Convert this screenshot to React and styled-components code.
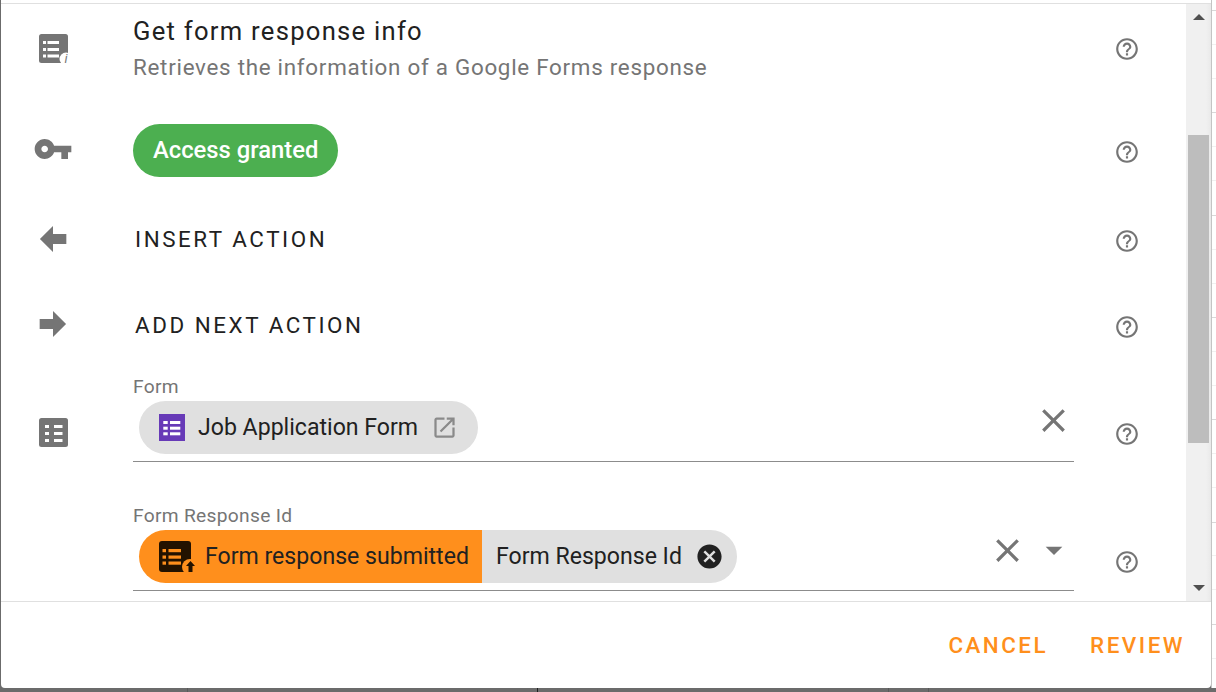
import React from "react";
import styled, { createGlobalStyle } from "styled-components";

const GlobalStyle = createGlobalStyle`
  html, body {
    margin: 0;
    padding: 0;
    height: 100%;
    overflow: hidden;
  }
  body {
    font-family: Roboto, "Liberation Sans", sans-serif;
  }
`;

const Page = styled.div`
  width: 1216px;
  height: 692px;
  display: flex;
  flex-direction: column;
  background: #6b6b6b;
`;
const Stage = styled.div`
  height: 688px;
  display: flex;
  padding-left: 1px;
`;
const BackdropStrip = styled.div`
  flex: 1;
  background:
    linear-gradient(#1f1f1f, #1f1f1f) 537px 0 / 1px 100% no-repeat,
    linear-gradient(#5a5a5a, #5a5a5a) 187px 0 / 1px 100% no-repeat,
    linear-gradient(#5a5a5a, #5a5a5a) 888px 0 / 1px 100% no-repeat,
    linear-gradient(#5a5a5a, #5a5a5a) 928px 0 / 1px 100% no-repeat;
`;
const Dialog = styled.div`
  width: 1210px;
  display: flex;
  flex-direction: column;
  background: #fff;
  border-radius: 0 0 4px 4px;
  overflow: hidden;
`;
const Gutter = styled.div`
  flex: 1;
  border-left: 1px solid #c4c4c4;
  background: repeating-linear-gradient(
    #fff 0 10px,
    #d8d8d8 10px 11px,
    #fff 11px 44px,
    #f0f0f0 44px 45px,
    #fff 45px 78px,
    #f0f0f0 78px 79px,
    #fff 79px 102.3px
  );
`;
const TopEdge = styled.div`
  height: 3px;
  border-bottom: 1px solid #e0e0e0;
`;
const Middle = styled.div`
  height: 597px;
  display: flex;
  border-bottom: 1px solid #e0e0e0;
`;
const Content = styled.div`
  flex: 1;
  overflow: hidden;
`;
const Row = styled.div`
  height: ${(p) => p.$h}px;
  margin-bottom: ${(p) => p.$after || 0}px;
  display: grid;
  grid-template-columns: 132px 941px 1fr;
  align-items: center;
`;
const IconCell = styled.div`
  display: flex;
  justify-content: center;
  width: 104px;
  margin-bottom: ${(p) => p.$lift}px;
`;
const Main = styled.div`
  min-width: 0;
  align-self: ${(p) => (p.$top ? "start" : "center")};
`;
const HelpCell = styled.div`
  display: flex;
  justify-content: center;
  width: 105px;
`;
const Icon = styled.svg`
  display: block;
  flex: none;
  overflow: visible;
  fill: ${(p) => p.$color || "#757575"};
`;
const Title = styled.div`
  font-size: 25.6px;
  line-height: 32px;
  font-weight: 400;
  letter-spacing: 1.27px;
  color: #212121;
`;
const Subtitle = styled.div`
  font-size: 22.4px;
  line-height: 32px;
  letter-spacing: 0.72px;
  margin-top: 4px;
  color: #757575;
`;
const GrantedPill = styled.div`
  display: inline-flex;
  align-items: center;
  height: 53px;
  padding: 0 20px;
  border-radius: 27px;
  background: #4caf50;
  color: #fff;
  font-size: 23.8px;
  font-weight: 500;
  margin-bottom: 4px;
`;
const ActionLabel = styled.div`
  padding-left: 2px;
  font-size: 22.4px;
  font-weight: 400;
  letter-spacing: 2.55px;
  color: #212121;
  margin-bottom: 4px;
`;
const FieldLabel = styled.div`
  font-size: 19.2px;
  line-height: 21px;
  letter-spacing: 0.3px;
  color: #757575;
`;
const Field = styled.div`
  display: flex;
  align-items: flex-start;
  justify-content: space-between;
  box-sizing: border-box;
  height: 65px;
  padding: 4px 0 0 6px;
  border-bottom: 1px solid #8c8c8c;
`;
const Chip = styled.div`
  display: flex;
  align-items: center;
  height: 53px;
  font-size: 23.1px;
  color: #212121;
  background: ${(p) => (p.$orange ? "#ff8f1c" : "#e0e0e0")};
  border-radius: ${(p) => p.$radius};
  padding: ${(p) => p.$padding};
  gap: ${(p) => p.$gap}px;
`;
const ChipGroup = styled.div`
  display: flex;
`;
const FieldTools = styled.div`
  display: flex;
  align-items: center;
  padding-right: ${(p) => p.$pad}px;
  gap: ${(p) => p.$gap}px;
`;
const Scrollbar = styled.div`
  width: 25px;
  background: linear-gradient(90deg, #f0f0f0 80%, #e9e9e9);
  display: flex;
  flex-direction: column;
  justify-content: space-between;
  position: relative;
`;
const ScrollThumb = styled.div`
  position: absolute;
  top: 131px;
  left: 2px;
  width: 21px;
  height: 308px;
  background: #bdbdbd;
`;
const ScrollArrow = styled.div`
  width: 0;
  height: 0;
  margin: ${(p) => (p.$up ? "10px 0 0 7px" : "0 0 10px 7px")};
  border-left: 6px solid transparent;
  border-right: 6px solid transparent;
  ${(p) => (p.$up ? "border-bottom" : "border-top")}: 6px solid #505050;
`;
const Footer = styled.div`
  flex: 1;
  display: flex;
  justify-content: flex-end;
  align-items: center;
  gap: 42px;
  padding: 0 26px 0 0;
`;
const FooterButton = styled.div`
  font-size: 22.4px;
  font-weight: 500;
  letter-spacing: 2.5px;
  color: #ff8f1c;
`;

const HELP =
  "M11 18h2v-2h-2v2zm1-16C6.48 2 2 6.48 2 12s4.48 10 10 10 10-4.48 10-10S17.52 2 12 2zm0 18c-4.41 0-8-3.59-8-8s3.59-8 8-8 8 3.59 8 8-3.59 8-8 8zm0-14c-2.21 0-4 1.79-4 4h2c0-1.1.9-2 2-2s2 .9 2 2c0 2-3 1.75-3 5h2c0-2.25 3-2.5 3-5 0-2.21-1.79-4-4-4z";
const CLOSE =
  "M19 6.41L17.59 5 12 10.59 6.41 5 5 6.41 10.59 12 5 17.59 6.41 19 12 13.41 17.59 19 19 17.59 13.41 12z";

const Help = () => (
  <HelpCell>
    <Icon width="26" height="26" viewBox="0 0 24 24">
      <path d={HELP} />
    </Icon>
  </HelpCell>
);

const ClearIcon = () => (
  <Icon width="39" height="39" viewBox="0 0 24 24">
    <path d={CLOSE} />
  </Icon>
);

// three bullet + line rows, used by all the form icons
const ListLines = ({ bx, bw, lx, lw, ys, h = 3, fill = "#fff" }) => (
  <>
    {ys.map((y) => (
      <React.Fragment key={y}>
        <rect x={bx} y={y} width={bw} height={h} fill={fill} />
        <rect x={lx} y={y} width={lw} height={h} fill={fill} />
      </React.Fragment>
    ))}
  </>
);

const App = () => {
  return (
    <>
      <GlobalStyle />
      <Page>
        <Stage>
          <Dialog>
            <TopEdge />
            <Middle>
              <Content>
                <Row $h={90} $after={6}>
                  <IconCell $lift={2}>
                    <Icon width="29" height="29" viewBox="0 0 29 29">
                      <rect width="29" height="29" rx="2.5" />
                      <ListLines bx={4} bw={3} lx={8.5} lw={11.5} ys={[7, 14, 20.5]} />
                      <circle cx="27" cy="25" r="6.5" fill="#fff" />
                      <text x="25.5" y="29" fontSize="13" fontStyle="italic" fontFamily="Roboto" fill="#757575">i</text>
                    </Icon>
                  </IconCell>
                  <Main>
                    <Title>Get form response info</Title>
                    <Subtitle>Retrieves the information of a Google Forms response</Subtitle>
                  </Main>
                  <Help />
                </Row>
                <Row $h={104}>
                  <IconCell $lift={6}>
                    <Icon width="40" height="40" viewBox="0 0 24 24">
                      <path d="M12.65 10C11.83 7.67 9.61 6 7 6c-3.31 0-6 2.69-6 6s2.69 6 6 6c2.61 0 4.83-1.67 5.65-4H17v4h4v-4h2v-4H12.65zM7 14c-1.1 0-2-.9-2-2s.9-2 2-2 2 .9 2 2-.9 2-2 2z" />
                    </Icon>
                  </IconCell>
                  <Main>
                    <GrantedPill>Access granted</GrantedPill>
                  </Main>
                  <Help />
                </Row>
                <Row $h={74}>
                  <IconCell $lift={5}>
                    <Icon width="40" height="40" viewBox="0 0 24 24">
                      <path d="M20,9V15H12V19.84L4.16,12L12,4.16V9H20Z" />
                    </Icon>
                  </IconCell>
                  <Main>
                    <ActionLabel>INSERT ACTION</ActionLabel>
                  </Main>
                  <Help />
                </Row>
                <Row $h={98}>
                  <IconCell $lift={6}>
                    <Icon width="40" height="40" viewBox="0 0 24 24">
                      <path d="M4,15V9H12V4.16L19.84,12L12,19.84V15H4Z" />
                    </Icon>
                  </IconCell>
                  <Main>
                    <ActionLabel>ADD NEXT ACTION</ActionLabel>
                  </Main>
                  <Help />
                </Row>
                <Row $h={116} $after={13}>
                  <IconCell $lift={3}>
                    <Icon width="29" height="29" viewBox="0 0 29 29">
                      <rect width="29" height="29" rx="2.5" />
                      <ListLines bx={6} bw={4} lx={15} lw={8.5} ys={[7, 14, 21]} />
                    </Icon>
                  </IconCell>
                  <Main $top>
                    <FieldLabel>Form</FieldLabel>
                    <Field>
                      <Chip $radius="27px" $padding="0 20px" $gap={13}>
                        <Icon width="26" height="27" viewBox="0 0 26 27" $color="#673ab7">
                          <rect width="26" height="27" />
                          <ListLines bx={4.3} bw={4.4} lx={11} lw={10.3} ys={[7, 12.7, 18.3]} />
                        </Icon>
                        Job Application Form
                        <Icon width="27" height="27" viewBox="0 0 24 24" $color="#8a8a8a">
                          <path d="M19 19H5V5h7V3H5c-1.11 0-2 .9-2 2v14c0 1.1.89 2 2 2h14c1.1 0 2-.9 2-2v-7h-2v7zM14 3v2h3.59l-9.83 9.83 1.41 1.41L19 6.41V10h2V3h-7z" />
                        </Icon>
                      </Chip>
                      <FieldTools $pad={1} $gap={0}>
                        <ClearIcon />
                      </FieldTools>
                    </Field>
                  </Main>
                  <Help />
                </Row>
                <Row $h={114}>
                  <div />
                  <Main $top>
                    <FieldLabel>Form Response Id</FieldLabel>
                    <Field>
                      <ChipGroup>
                        <Chip $orange $radius="27px 0 0 27px" $padding="0 13px 0 20px" $gap={14}>
                          <Icon width="32" height="32" viewBox="0 0 32 32" $color="#231200">
                            <rect width="32" height="31" rx="3" />
                            <ListLines bx={3.5} bw={3.5} lx={9.5} lw={12.5} ys={[8, 14.5, 20.5]} h={3.2} fill="#ff8f1c" />
                            <circle cx="31" cy="26" r="8" fill="#ff8f1c" />
                            <path d="M31.5 20l4.5 5h-2.5v6h-4v-6H27z" />
                          </Icon>
                          Form response submitted
                        </Chip>
                        <Chip $radius="0 27px 27px 0" $padding="0 13px 0 14px" $gap={13.5}>
                          Form Response Id
                          <Icon width="29" height="29" viewBox="0 0 24 24" $color="#212121">
                            <path d="M12 2C6.47 2 2 6.47 2 12s4.47 10 10 10 10-4.47 10-10S17.53 2 12 2zm5 13.59L15.59 17 12 13.41 8.41 17 7 15.59 10.59 12 7 8.41 8.41 7 12 10.59 15.59 7 17 8.41 13.41 12 17 15.59z" />
                          </Icon>
                        </Chip>
                      </ChipGroup>
                      <FieldTools $pad={0} $gap={7}>
                        <ClearIcon />
                        <Icon width="40" height="40" viewBox="0 0 24 24">
                          <path d="M7 10l5 5 5-5z" />
                        </Icon>
                      </FieldTools>
                    </Field>
                  </Main>
                  <Help />
                </Row>
              </Content>
              <Scrollbar>
                <ScrollArrow $up />
                <ScrollThumb />
                <ScrollArrow />
              </Scrollbar>
            </Middle>
            <Footer>
              <FooterButton>CANCEL</FooterButton>
              <FooterButton>REVIEW</FooterButton>
            </Footer>
          </Dialog>
          <Gutter />
        </Stage>
        <BackdropStrip />
      </Page>
    </>
  );
};

export default App;
